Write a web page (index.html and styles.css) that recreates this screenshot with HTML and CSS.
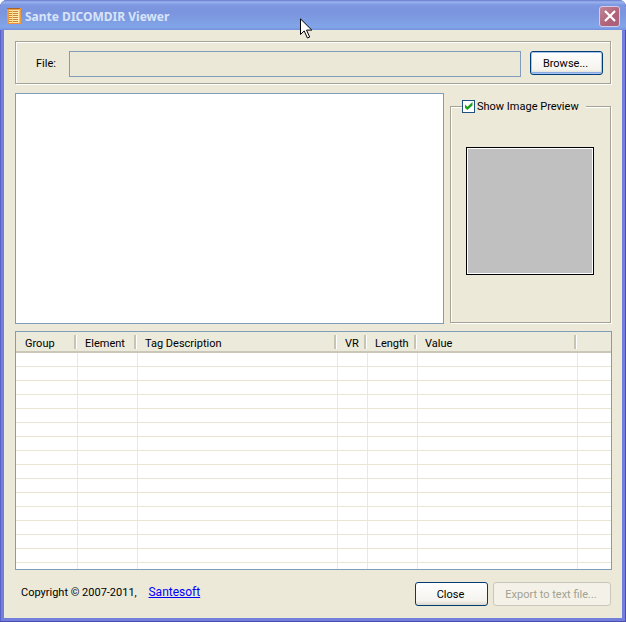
FILE: index.html
```html
<!DOCTYPE html>
<html lang="en">
<head>
<meta charset="utf-8">
<title>Sante DICOMDIR Viewer</title>
<link rel="stylesheet" href="styles.css">
</head>
<body>
<div class="window">
  <header class="titlebar">
    <svg class="app-icon" width="14" height="16" viewBox="0 0 14 16" aria-hidden="true">
      <rect x="0" y="0" width="14" height="16" fill="#ee9a3c"/>
      <rect x="2" y="2" width="10" height="13" fill="#fdebb0"/>
      <path d="M0 .5h13" stroke="#a8642a"/>
      <path d="M2 3.500h9M2 5.500h9M2 7.500h9M2 9.500h9M2 11.500h9M2 13.500h9" stroke="#c8863c"/>
      <path d="M5.500 2v13" stroke="#f6cf80"/>
      <path d="M12.500 1v15" stroke="#f6bd5a"/>
      <path d="M0 15.500h13" stroke="#f08c3c"/>
    </svg>
    <h1 class="title">Sante DICOMDIR Viewer</h1>
    <button class="close-x" type="button" aria-label="Close window">
      <svg width="12" height="12" viewBox="0 0 12 12" aria-hidden="true"><path d="M1 1l10 10M11 1L1 11" stroke="#fff" stroke-width="2.200"/></svg>
    </button>
  </header>
  <main class="content">
    <div class="file-box etched">
      <label class="file-label" for="file">File:</label>
      <input class="file-input" id="file" type="text" readonly>
      <button class="btn btn-default" type="button">Browse...</button>
    </div>
    <div class="middle">
      <div class="tree"></div>
      <fieldset class="preview etched">
        <legend class="preview-legend">
          <input class="check" id="show" type="checkbox" checked><label class="check-label" for="show">Show Image Preview</label>
        </legend>
        <div class="preview-image"></div>
      </fieldset>
    </div>
    <div class="list">
      <table class="tags">
        <colgroup><col class="c-group"><col class="c-element"><col class="c-tag"><col class="c-vr"><col class="c-length"><col class="c-value"><col></colgroup>
        <thead><tr><th>Group</th><th>Element</th><th>Tag Description</th><th>VR</th><th>Length</th><th>Value</th><th></th></tr></thead>
        <tbody>
          <tr><td></td><td></td><td></td><td></td><td></td><td></td><td></td></tr>
          <tr><td></td><td></td><td></td><td></td><td></td><td></td><td></td></tr>
          <tr><td></td><td></td><td></td><td></td><td></td><td></td><td></td></tr>
          <tr><td></td><td></td><td></td><td></td><td></td><td></td><td></td></tr>
          <tr><td></td><td></td><td></td><td></td><td></td><td></td><td></td></tr>
          <tr><td></td><td></td><td></td><td></td><td></td><td></td><td></td></tr>
          <tr><td></td><td></td><td></td><td></td><td></td><td></td><td></td></tr>
          <tr><td></td><td></td><td></td><td></td><td></td><td></td><td></td></tr>
          <tr><td></td><td></td><td></td><td></td><td></td><td></td><td></td></tr>
          <tr><td></td><td></td><td></td><td></td><td></td><td></td><td></td></tr>
          <tr><td></td><td></td><td></td><td></td><td></td><td></td><td></td></tr>
          <tr><td></td><td></td><td></td><td></td><td></td><td></td><td></td></tr>
          <tr><td></td><td></td><td></td><td></td><td></td><td></td><td></td></tr>
          <tr><td></td><td></td><td></td><td></td><td></td><td></td><td></td></tr>
          <tr><td></td><td></td><td></td><td></td><td></td><td></td><td></td></tr>
          <tr class="last"><td></td><td></td><td></td><td></td><td></td><td></td><td></td></tr>
        </tbody>
      </table>
    </div>
    <footer class="footer">
      <p class="copyright">Copyright © 2007-2011, <a class="link" href="#">Santesoft</a></p>
      <button class="btn" type="button">Close</button>
      <button class="btn btn-export" type="button" disabled>Export to text file...</button>
    </footer>
  </main>
  <svg class="cursor" width="13" height="21" viewBox="0 0 13 21" aria-hidden="true">
    <path d="M.5.9v15.600l3.700-3.600 3.200 7.100 2.300-1-3.200-6.900h5.300z" fill="#fff" stroke="#000"/>
  </svg>
</div>
</body>
</html>
```
FILE: styles.css
```css
* { box-sizing: border-box; }

body {
  margin: 0;
  background: #fff;
  color: #000;
  font: 11px/14px Roboto, "Noto Sans", sans-serif;
}

button, input { font: inherit; }

.window {
  position: relative;
  display: flex;
  flex-direction: column;
  min-height: 100vh;
  padding: 0 4px 4px;
  background: #7280dc;
  border-radius: 7px 7px 0 0;
  box-shadow: inset -1px -1px #4a4cb4, inset 1px 0 #5a62c8;
  overflow: hidden;
}

.titlebar {
  display: flex;
  align-items: center;
  height: 30px;
  margin: 0 -4px;
  padding: 2px 6px 0 7px;
  background: linear-gradient(#6577cc 0, #99b4ee 2px, #7d97e0 5px, #7b94de 12px, #7f9fe4 22px, #82a5e8 27px, #7590dd 30px);
}

.title {
  flex: 1;
  margin: 2px 0 0 4px;
  color: #d8e4f8;
  font: bold 12px/16px "Noto Sans", "Open Sans", sans-serif;
}

.close-x {
  display: grid;
  place-items: center;
  width: 21px;
  height: 21px;
  padding: 0;
  border: 1px solid #d3cbea;
  border-radius: 3px;
  background: linear-gradient(135deg, #c28595, #b0627a 60%, #a9607c);
}

.content {
  display: flex;
  flex: 1;
  flex-direction: column;
  padding: 11px 10px 12px 11px;
  background: #ece9d8;
}

.etched {
  border: 1px solid #a5a396;
  box-shadow: 1px 1px #fff, inset 1px 1px #fff;
}

.file-box {
  display: flex;
  align-items: flex-start;
  height: 43px;
  margin-right: 1px;
  padding: 9px 7px 0 20px;
}

.file-label { width: 33px; padding-top: 6px; }

.file-input {
  flex: 1;
  min-width: 0;
  height: 26px;
  margin-right: 9px;
  padding: 0 4px;
  border: 1px solid #7f9db9;
  background: #ebe8d7;
}

.btn {
  min-width: 73px;
  height: 24px;
  padding: 2px 2px 0 0;
  border: 1px solid #003c74;
  border-radius: 3px;
  background: linear-gradient(#fff, #f4f3ee 80%, #dcd8cc);
  color: #000;
}

.btn-default { box-shadow: inset 0 0 0 1px #a9c4f0, inset 0 -2px #8aaae6; }

.btn:disabled {
  border-color: #c9c7ba;
  background: #f4f2e8;
  color: #a1a192;
}

.middle {
  display: flex;
  gap: 6px;
  margin: 9px 1px 7px 0;
}

.tree {
  flex: 1;
  height: 231px;
  border: 1px solid #7f9db9;
  background: #fff;
}

.preview {
  width: 161px;
  margin: 5px 0 1px;
  padding: 0;
}

.preview-legend {
  display: flex;
  align-items: center;
  gap: 2px;
  margin-left: 11px;
  padding: 0 7px 0 0;
  background: #ece9d8;
}

.check {
  appearance: none;
  display: grid;
  place-items: center;
  width: 13px;
  height: 13px;
  margin: 0;
  border: 1px solid #1c5180;
  background: #fff;
}

.check-label { padding-top: 2px; }

.check:checked::after {
  width: 8px;
  height: 8px;
  background: #21a121;
  clip-path: polygon(0 25%, 36% 58%, 100% 0, 100% 45%, 36% 100%, 0 70%);
  content: "";
}

.preview-image {
  width: 128px;
  height: 128px;
  margin: 33px auto 0 15px;
  border: 1px solid #000;
  background: #c0c0c0;
  box-shadow: inset 0 0 0 1px #fff;
}

.list {
  flex: 1;
  min-height: 239px;
  border: 1px solid #7f9db9;
  background: #fff;
  overflow: hidden;
}

.tags {
  width: 100%;
  border-spacing: 0;
  table-layout: fixed;
}

.c-group { width: 62px; }
.c-element { width: 60px; }
.c-tag { width: 200px; }
.c-vr { width: 30px; }
.c-length { width: 50px; }
.c-value { width: 160px; }

th {
  position: relative;
  height: 21px;
  padding: 4px 0 0 7px;
  border-bottom: 2px solid #cbc7b8;
  background: #ebeadb;
  font-weight: normal;
  text-align: left;
  white-space: nowrap;
}

th:first-child { padding-left: 9px; }

/* Divider between header cells */
th:not(:last-child)::after {
  position: absolute;
  top: 3px;
  right: 1px;
  width: 2px;
  height: 14px;
  border-right: 1px solid #fff;
  background: #c7c5b2;
  background-clip: padding-box;
  content: "";
}

td {
  height: 14px;
  padding: 0;
  border-right: 1px solid #ece9d8;
  border-bottom: 1px solid #e9e5d3;
}

td:last-child { border-right: 0; }

.last td { height: 6px; border-bottom: 0; }

.footer {
  display: flex;
  align-items: flex-start;
  gap: 5px;
  margin: 12px 1px 0 0;
}

.copyright { flex: 1; margin: 3px 0 0 6px; }

.link { margin-left: 9px; color: #00f; font-size: 12px; }

.btn-export { width: 118px; }

.cursor {
  position: absolute;
  top: 18px;
  left: 300px;
}
```
